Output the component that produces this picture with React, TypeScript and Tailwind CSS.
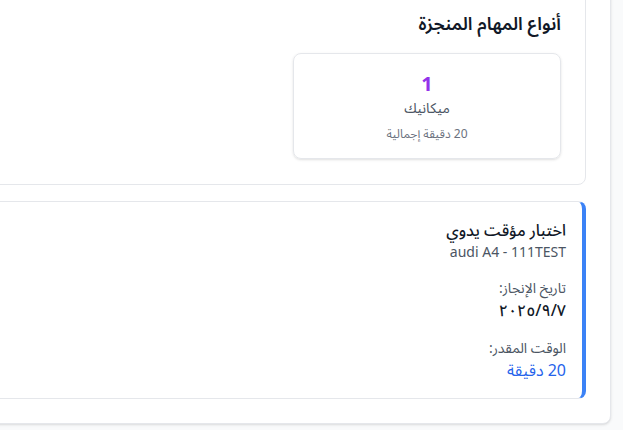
export default function App() {
  return (
    <div
      dir="rtl"
      className="w-[623px] h-[430px] overflow-hidden bg-[#f9fafb] flex pr-3 font-['Noto_Sans','Noto_Sans_Arabic','DejaVu_Sans',sans-serif]"
    >
      <div className="w-[900px] shrink-0 -mt-[41px] self-start bg-white border border-[#e5e7eb] rounded-lg shadow-sm p-6 space-y-4">
        {/* task types */}
        <div className="bg-white border border-[#e5e7eb] rounded-lg p-6 pb-[25px]">
          <h3 className="text-lg font-semibold text-[#111827] mb-4">أنواع المهام المنجزة</h3>
          <div className="flex gap-4">
            <div className="w-[268px] border border-[#e5e7eb] rounded-lg shadow-sm p-4 text-center">
              <div className="text-xl font-bold text-[#9333ea]">1</div>
              <div className="text-sm text-[#4b5563]">ميكانيك</div>
              <div className="text-xs text-[#6b7280] mt-2">20 دقيقة إجمالية</div>
            </div>
          </div>
        </div>

        {/* task row */}
        <div className="bg-white border border-[#e5e7eb] border-r-4 border-r-[#3b82f6] rounded-lg p-4">
          <div className="flex justify-between items-start">
            <div>
              <h4 className="text-base font-medium text-[#111827]">اختبار مؤقت يدوي</h4>
              <p className="text-sm text-[#4b5563]">audi A4 - 111TEST</p>
              <div className="mt-4">
                <p className="text-sm text-[#4b5563]">تاريخ الإنجاز:</p>
                <p className="text-base font-medium text-[#111827]">٢٠٢٥/٩/٧</p>
              </div>
              <div className="mt-4">
                <p className="text-sm text-[#4b5563]">الوقت المقدر:</p>
                <p className="text-base text-[#2563eb]">20 دقيقة</p>
              </div>
            </div>
          </div>
        </div>
      </div>
    </div>
  )
}
